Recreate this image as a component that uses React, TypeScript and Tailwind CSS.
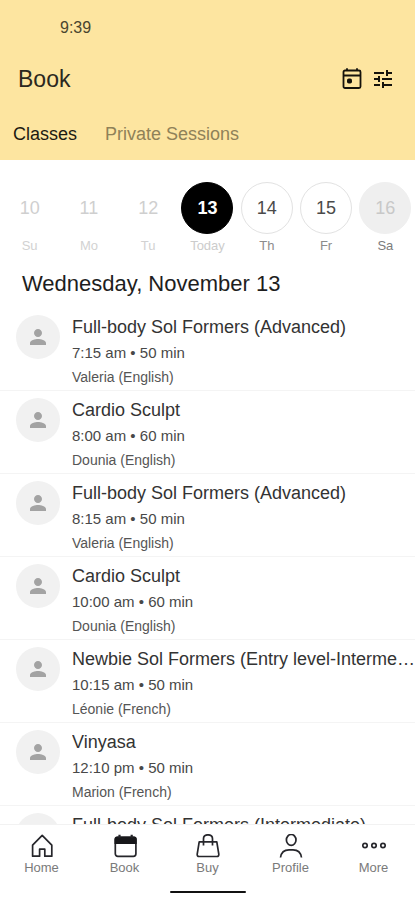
import { useState } from "react";
import type { ReactNode } from "react";
import { MdPerson, MdTune } from "react-icons/md";

type Day = { date: number; label: string; state: "past" | "today" | "open" | "empty" };

const days: Day[] = [
  { date: 10, label: "Su", state: "past" },
  { date: 11, label: "Mo", state: "past" },
  { date: 12, label: "Tu", state: "past" },
  { date: 13, label: "Today", state: "today" },
  { date: 14, label: "Th", state: "open" },
  { date: 15, label: "Fr", state: "open" },
  { date: 16, label: "Sa", state: "empty" },
];

const circleStyles: Record<Day["state"], string> = {
  past: "border-transparent text-[#cfcfcf]",
  today: "border-black bg-black font-bold text-white",
  open: "border-[#e2e2e2] bg-white text-[#4a4a4a]",
  empty: "border-[#efefef] bg-[#efefef] text-[#c8c8c8]",
};

const labelStyles: Record<Day["state"], string> = {
  past: "text-[#d2d2d2]",
  today: "text-[#cccccc]",
  open: "text-[#8c8c8c]",
  empty: "text-[#7c7c7c]",
};

const classes = [
  { title: "Full-body Sol Formers (Advanced)", time: "7:15 am • 50 min", coach: "Valeria (English)" },
  { title: "Cardio Sculpt", time: "8:00 am • 60 min", coach: "Dounia (English)" },
  { title: "Full-body Sol Formers (Advanced)", time: "8:15 am • 50 min", coach: "Valeria (English)" },
  { title: "Cardio Sculpt", time: "10:00 am • 60 min", coach: "Dounia (English)" },
  { title: "Newbie Sol Formers (Entry level-Intermediate)", time: "10:15 am • 50 min", coach: "Léonie (French)" },
  { title: "Vinyasa", time: "12:10 pm • 50 min", coach: "Marion (French)" },
  { title: "Full-body Sol Formers (Intermediate)", time: "12:15 pm • 50 min", coach: "Valeria (English)" },
];

function NavIcon({ children }: { children: ReactNode }) {
  return (
    <svg viewBox="0 0 24 24" className="size-6" fill="none" stroke="#26262b" strokeWidth="1.7" aria-hidden="true">
      {children}
    </svg>
  );
}

const navItems = [
  {
    label: "Home",
    icon: (
      <NavIcon>
        <path d="M2.600 11.200 12.200 1.300l9.600 9.900V22.200h-7v-7h-5.200v7h-7z" strokeLinejoin="round" />
      </NavIcon>
    ),
  },
  {
    label: "Book",
    icon: (
      <NavIcon>
        <rect x="2.300" y="3.300" width="20.600" height="19" rx="2.500" />
        <path d="M1.500 10V5A2.500 2.500 0 0 1 4 2.500h17.200A2.500 2.500 0 0 1 23.700 5v5z" fill="#17171a" stroke="none" />
        <path d="M6.500 .8v3M18.700 .8v3" strokeWidth="2.200" />
      </NavIcon>
    ),
  },
  {
    label: "Buy",
    icon: (
      <NavIcon>
        <path d="M3.200 7.800h17.600L22.800 20.200q.3 2.300-2 2.300H3.200q-2.300 0-2-2.300z" strokeLinejoin="round" />
        <path d="M7.500 11.500V4.800q0-4 4.500-4t4.500 4v6.700" />
      </NavIcon>
    ),
  },
  {
    label: "Profile",
    icon: (
      <NavIcon>
        <ellipse cx="12.200" cy="5.900" rx="4.800" ry="5.400" />
        <path d="M1.500 23.500C2.200 18.500 5 15.800 10 15.800h4c5 0 7.800 2.700 8.500 7.700" />
      </NavIcon>
    ),
  },
  {
    label: "More",
    icon: (
      <NavIcon>
        <circle cx="3" cy="11.500" r="2.200" />
        <circle cx="12" cy="11.500" r="2.200" />
        <circle cx="21" cy="11.500" r="2.200" />
      </NavIcon>
    ),
  },
];

function CalendarIcon() {
  return (
    <svg viewBox="0 0 24 24" className="size-6" fill="none" stroke="currentColor" strokeWidth="1.800" aria-hidden="true">
      <rect x="3.500" y="3.500" width="17" height="17.500" rx="1.500" />
      <path d="M3.500 8.500h17M7 1.300v2.500M17 1.300v2.500" />
      <rect x="7" y="11.500" width="5" height="5" rx="1.800" fill="currentColor" stroke="none" />
    </svg>
  );
}

export default function App() {
  const [tab, setTab] = useState("Classes");

  return (
    <div className="flex h-screen flex-col bg-white font-['Liberation_Sans',Arial,sans-serif]">
      <header className="bg-[#fde5a0]">
        <div className="flex h-14 items-center pl-15 text-base text-[#4a452f]">9:39</div>
        <div className="flex h-[46px] items-center pr-5 pl-[18px]">
          <h1 className="flex-1 text-[23px] text-[#2b2820]">Book</h1>
          <div className="flex gap-[7px] text-[#15130c]">
            <button type="button" aria-label="Choose date">
              <CalendarIcon />
            </button>
            <button type="button" aria-label="Filters">
              <MdTune className="size-6" />
            </button>
          </div>
        </div>
        <nav className="flex gap-7 px-[13px] pt-5 pb-3.5 text-lg/6">
          {["Classes", "Private Sessions"].map((name) => (
            <button
              key={name}
              type="button"
              onClick={() => setTab(name)}
              className={tab === name ? "text-[#1c1a12]" : "text-[#8f8158]"}
            >
              {name}
            </button>
          ))}
        </nav>
      </header>

      <main className="flex min-h-0 flex-1 flex-col">
        <div className="grid grid-cols-7 pt-[22px]">
          {days.map((day) => (
            <button key={day.date} type="button" className="flex flex-col items-center gap-1">
              <span
                className={`flex size-[52px] items-center justify-center rounded-full border text-lg ${circleStyles[day.state]}`}
              >
                {day.date}
              </span>
              <span className={`text-[13px]/4 ${labelStyles[day.state]}`}>{day.label}</span>
            </button>
          ))}
        </div>
        <h2 className="px-[22px] pt-4 pb-2.5 text-[22px]/7 text-[#1e1e1e]">Wednesday, November 13</h2>
        <ul className="min-h-0 flex-1 overflow-x-hidden overflow-y-auto [scrollbar-width:none]">
          {classes.map((item, index) => (
            <li key={index} className="flex gap-3 border-b border-[#f4f4f4] pt-[5px] pb-px pl-4">
              <span className="mt-0.5 flex size-11 shrink-0 items-center justify-center rounded-full bg-[#f1f1f1]">
                <MdPerson className="size-6 text-[#a3a3a3]" />
              </span>
              <div className="-mr-0.5 min-w-0 flex-1">
                <h3 className="truncate text-lg/7 text-[#333333]">{item.title}</h3>
                <p className="text-[15px]/6 text-[#484848]">{item.time}</p>
                <p className="text-sm/6 text-[#555555]">{item.coach}</p>
              </div>
            </li>
          ))}
        </ul>
      </main>

      <footer className="border-t border-[#f2f2f2] bg-white">
        <nav className="grid grid-cols-5 pt-[9px]">
          {navItems.map((item) => (
            <a key={item.label} href="#" className="flex flex-col items-center gap-0.5">
              {item.icon}
              <span className="text-[13px]/4 text-[#7a7a7a]">{item.label}</span>
            </a>
          ))}
        </nav>
        <div className="mx-auto mt-[15px] mb-[7px] h-0.5 w-19 rounded-full bg-[#111111]" />
      </footer>
    </div>
  );
}
